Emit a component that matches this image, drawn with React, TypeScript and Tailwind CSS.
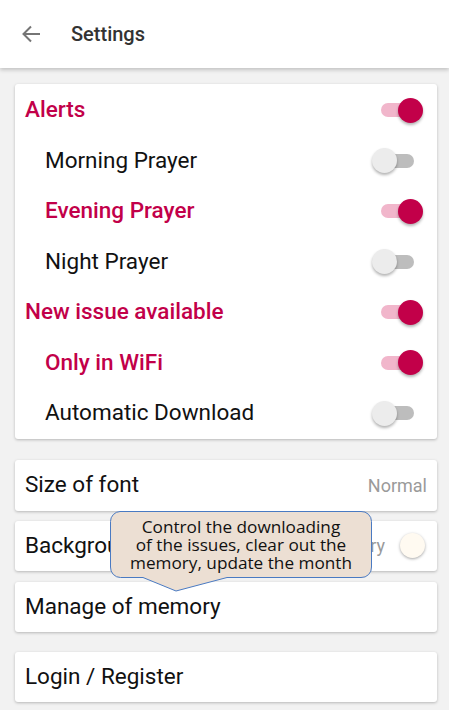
import React from "react";

const CRIMSON = "text-[#c20049]";

function Toggle({ on }: { on: boolean }) {
  return (
    <div className="relative h-[25px] w-[51px] shrink-0">
      <div
        className={`absolute left-[9px] right-[9px] top-[5.5px] h-[14px] rounded-full ${
          on ? "bg-[#f1b6cb]" : "bg-[#bdbdbd]"
        }`}
      />
      <div
        className={`absolute top-0 h-[25px] w-[25px] rounded-full shadow-[0_2px_3px_rgba(0,0,0,0.3)] ${
          on ? "right-0 bg-[#c20049]" : "left-0 bg-[#ececec]"
        }`}
      />
    </div>
  );
}

type Row = { label: string; on: boolean; sub?: boolean };

const alertRows: Row[] = [
  { label: "Alerts", on: true },
  { label: "Morning Prayer", on: false, sub: true },
  { label: "Evening Prayer", on: true, sub: true },
  { label: "Night Prayer", on: false, sub: true },
  { label: "New issue available", on: true },
  { label: "Only in WiFi", on: true, sub: true },
  { label: "Automatic Download", on: false, sub: true },
];

function Card({ children, className = "" }: { children: React.ReactNode; className?: string }) {
  return (
    <div className={`rounded-[3px] bg-white shadow-[0_1px_3px_rgba(0,0,0,0.25)] ${className}`}>
      {children}
    </div>
  );
}

export default function App() {
  return (
    <main
      className="relative min-h-[710px] w-full overflow-hidden bg-[#f2f2f2]"
      style={{ fontFamily: "Roboto, 'Noto Sans', sans-serif" }}
    >
      <header className="relative z-10 flex h-[68px] items-center bg-white shadow-[0_2px_4px_rgba(0,0,0,0.2)]">
        <svg width="24" height="24" viewBox="0 0 24 24" className="ml-[19px]">
          <path
            d="M21 12H4.5M12 4.5l-7.5 7.5 7.5 7.5"
            fill="none"
            stroke="#757575"
            strokeWidth="2"
          />
        </svg>
        <h1 className="ml-[28px] text-[20px] font-medium text-[#333]">Settings</h1>
      </header>

      <section className="flex flex-col pl-[15px] pr-[12px] pt-[16px]">
        <Card className="pt-[1px]">
          {alertRows.map((r) => (
            <div
              key={r.label}
              className={`flex h-[50.5px] items-center justify-between pr-[14px] ${
                r.sub ? "pl-[30px]" : "pl-[10px]"
              }`}
            >
              <span
                className={`text-[22.5px] ${
                  r.on ? `${CRIMSON} font-medium` : "text-[#111]"
                }`}
              >
                {r.label}
              </span>
              <Toggle on={r.on} />
            </div>
          ))}
        </Card>

        <Card className="mt-[21px] flex h-[51px] items-center justify-between pl-[10px] pr-[10px]">
          <span className="text-[22.5px] text-[#111]">Size of font</span>
          <span className="text-[18px] text-[#9a9a9a]">Normal</span>
        </Card>

        <Card className="mt-[10px] flex h-[50px] items-center justify-between pl-[10px] pr-[12px]">
          <span className="text-[22.5px] text-[#111]">Background color</span>
          <div className="flex items-center gap-[15px]">
            <span className="text-[18px] text-[#9a9a9a]">Ivory</span>
            <div className="h-[25px] w-[25px] rounded-full bg-[#fffaf1] shadow-[0_1px_3px_rgba(0,0,0,0.35)]" />
          </div>
        </Card>

        <Card className="mt-[11px] flex h-[50px] items-center pl-[10px]">
          <span className="text-[22.5px] text-[#111]">Manage of memory</span>
        </Card>

        <Card className="mt-[20px] flex h-[50px] items-center pl-[10px]">
          <span className="text-[22.5px] text-[#111]">Login / Register</span>
        </Card>
      </section>

      <div className="absolute left-[110px] top-[511px] h-[81px] w-[262px]">
        <svg width="262" height="81" viewBox="0 0 262 81" className="absolute inset-0">
          <path
            d="M10 0.5 H251 A10 10 0 0 1 261.5 10.5 V56 A10 10 0 0 1 251 66.5 H117 L66 80 L33 66.5 H10.5 A10 10 0 0 1 0.5 56 V10.5 A10 10 0 0 1 10 0.5 Z"
            fill="#ecdfd3"
            stroke="#4a7ac2"
            strokeWidth="1"
          />
        </svg>
        <p
          className="relative pt-[7px] text-center text-[17.2px] font-medium leading-[18px] text-[#111]"
          style={{ fontFamily: "'Open Sans', sans-serif" }}
        >
          Control the downloading
          <br />
          of the issues, clear out the
          <br />
          memory, update the month
        </p>
      </div>
    </main>
  );
}
